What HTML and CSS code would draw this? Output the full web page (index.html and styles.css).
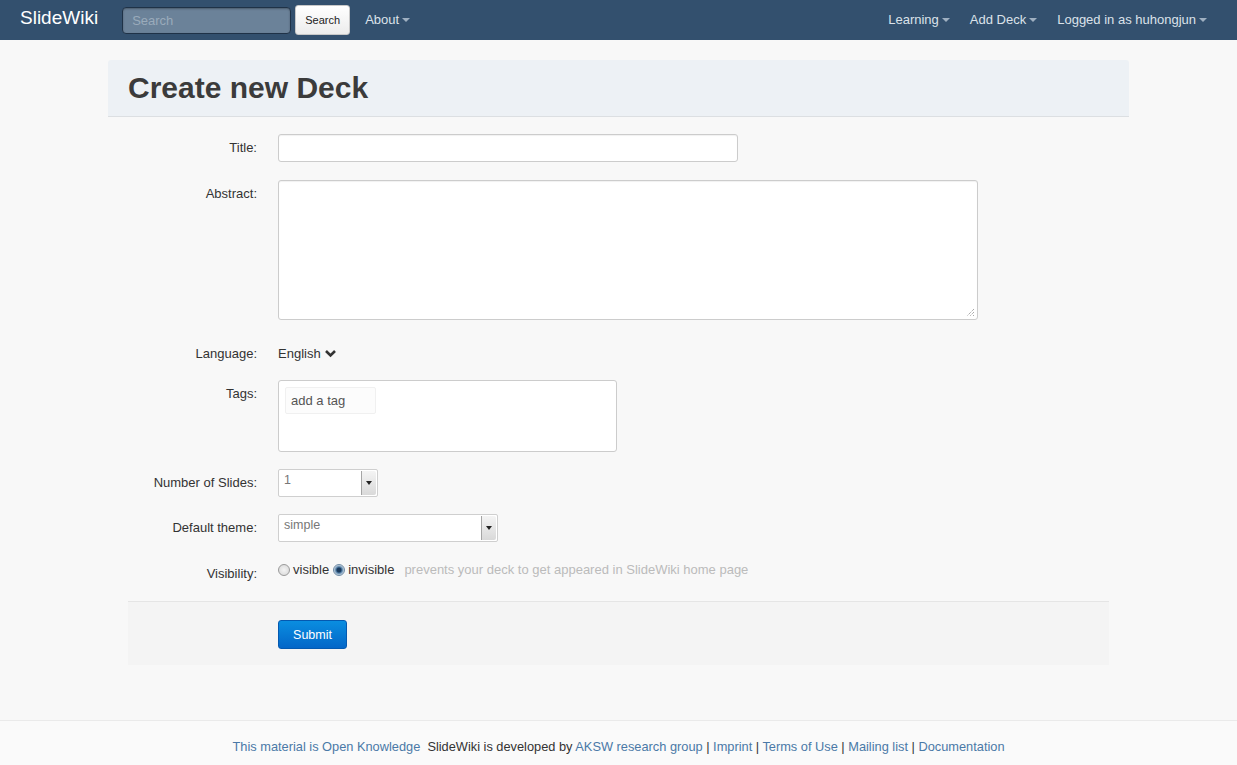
FILE: index.html
```html
<!DOCTYPE html>
<html>
<head>
<meta charset="utf-8">
<link rel="stylesheet" href="styles.css">
</head>
<body>
<div class="navbar">
  <div class="nav-left">
    <a class="brand">SlideWiki</a>
    <input class="search-input" placeholder="Search">
    <button class="search-btn">Search</button>
    <a class="nav-link">About <span class="caret"></span></a>
  </div>
  <div class="nav-right">
    <a class="nav-link">Learning <span class="caret"></span></a>
    <a class="nav-link">Add Deck <span class="caret"></span></a>
    <a class="nav-link">Logged in as huhongjun <span class="caret"></span></a>
  </div>
</div>

<div class="main">
  <div class="page-header"><h1>Create new Deck</h1></div>
  <form class="form">
    <div class="row row-title">
      <label class="lbl">Title:</label>
      <div class="ctl"><input class="text-input title-input"></div>
    </div>
    <div class="row row-abstract">
      <label class="lbl">Abstract:</label>
      <div class="ctl"><div class="textarea"><svg class="grip" width="10" height="10" viewBox="0 0 10 10"><path d="M9 2L2 9M9 5L5 9M9 8L8 9" stroke="#888" stroke-width="1" stroke-dasharray="1 1"/></svg></div></div>
    </div>
    <div class="row row-lang">
      <label class="lbl">Language:</label>
      <div class="ctl lang">English <svg width="11" height="9" viewBox="0 0 11 9"><path d="M1 2L5.5 6.5L10 2" fill="none" stroke="#333" stroke-width="2.6"/></svg></div>
    </div>
    <div class="row row-tags">
      <label class="lbl">Tags:</label>
      <div class="ctl"><div class="tags"><div class="tag-input">add a tag</div></div></div>
    </div>
    <div class="row row-num">
      <label class="lbl">Number of Slides:</label>
      <div class="ctl"><div class="select sel-num"><span class="sel-val">1</span><span class="sel-arrow"><span class="tri"></span></span></div></div>
    </div>
    <div class="row row-theme">
      <label class="lbl">Default theme:</label>
      <div class="ctl"><div class="select sel-theme"><span class="sel-val">simple</span><span class="sel-arrow"><span class="tri"></span></span></div></div>
    </div>
    <div class="row row-vis">
      <label class="lbl">Visibility:</label>
      <div class="ctl vis">
        <span class="radio"></span><span class="rtext">visible</span>
        <span class="radio on"></span><span class="rtext">invisible</span>
        <span class="help">prevents your deck to get appeared in SlideWiki home page</span>
      </div>
    </div>
    <div class="actions">
      <button type="button" class="submit">Submit</button>
    </div>
  </form>
</div>

<div class="footer">
  <a>This material is Open Knowledge</a>&nbsp; SlideWiki is developed by <a>AKSW research group</a> | <a>Imprint</a> | <a>Terms of Use</a> | <a>Mailing list</a> | <a>Documentation</a>
</div>
</body>
</html>
```
FILE: styles.css
```css
* { box-sizing: border-box; }
body {
  margin: 0;
  background: #f8f8f8;
  font-family: "Liberation Sans", Arial, sans-serif;
  font-size: 13px;
  color: #333;
}
.navbar {
  height: 40px;
  background: #33506e;
  display: flex;
  justify-content: space-between;
  align-items: center;
  padding: 0 30px 0 20px;
}
.nav-left, .nav-right { display: flex; align-items: center; }
.brand {
  color: #fff;
  font-size: 19px;
  margin-right: 24px;
  margin-top: -4px;
}
.search-input {
  width: 169px;
  height: 27px;
  background: #6b8299;
  border: 1px solid #1f3247;
  border-radius: 4px;
  box-shadow: inset 0 1px 2px rgba(0,0,0,0.3);
  font-family: inherit;
  font-size: 13px;
  padding: 0 9px;
  color: #fff;
  margin-top: 1px;
}
.search-input::placeholder { color: #9aabbb; }
.search-btn {
  margin-left: 4px;
  width: 55px;
  height: 30px;
  background: linear-gradient(#fff, #ececec);
  border: 1px solid #c8c8c8;
  border-radius: 3px;
  font-family: inherit;
  font-size: 11px;
  color: #222;
  padding: 0;
  margin-top: -1px;
}
.nav-link {
  color: #dbe2ea;
  font-size: 13px;
  display: flex;
  align-items: center;
  margin-top: -2px;
}
.nav-left .nav-link { margin-left: 15px; }
.nav-right .nav-link { margin-left: 20px; }
.caret {
  display: inline-block;
  width: 0; height: 0;
  border-left: 4px solid transparent;
  border-right: 4px solid transparent;
  border-top: 4px solid #9fb0c1;
  margin-left: 3px;
  margin-top: 1px;
}

.main {
  width: 1021px;
  margin: 20px 0 0 108px;
}
.page-header {
  background: #edf1f5;
  border-bottom: 1px solid #dcdfe2;
  border-radius: 3px 3px 0 0;
  height: 57px;
  padding: 0 20px;
}
.page-header h1 {
  margin: 0;
  font-size: 30px;
  line-height: 56px;
  font-weight: bold;
  color: #3b3b3b;
}
.form { padding: 17px 20px 0 20px; }
.row { display: flex; align-items: flex-start; }
.lbl {
  width: 129px;
  text-align: right;
  flex-shrink: 0;
  color: #333;
  font-size: 13px;
  padding-top: 6px;
}
.ctl { margin-left: 21px; }
.text-input {
  background: #fff;
  border: 1px solid #ccc;
  border-radius: 3px;
  box-shadow: inset 0 1px 1px rgba(0,0,0,0.06);
}
.title-input { width: 460px; height: 28px; display: block; }
.row-abstract { margin-top: 18px; }
.textarea {
  width: 700px;
  height: 140px;
  background: #fff;
  border: 1px solid #ccc;
  border-radius: 3px;
  box-shadow: inset 0 1px 1px rgba(0,0,0,0.06);
  position: relative;
}
.grip { position: absolute; right: 2px; bottom: 2px; }
.row-lang { margin-top: 26px; align-items: center; }
.row-lang .lbl { padding-top: 0; }
.lang { font-size: 13px; color: #333; display: flex; align-items: center; gap: 4px; }
.row-tags { margin-top: 19px; }
.tags {
  width: 339px;
  height: 72px;
  background: #fff;
  border: 1px solid #ccc;
  border-radius: 3px;
  padding: 6px;
}
.tag-input {
  width: 91px;
  height: 27px;
  background: #fcfcfc;
  border: 1px solid #f0f0f0;
  border-radius: 2px;
  font-size: 13px;
  color: #555;
  padding: 5px 0 0 5px;
}
.row-num { margin-top: 17px; }
.row-theme { margin-top: 17px; }
.select {
  height: 28px;
  background: #fff;
  border: 1px solid #cfcfcf;
  border-radius: 2px;
  display: flex;
  justify-content: space-between;
}
.sel-num { width: 100px; }
.sel-theme { width: 220px; }
.sel-val { font-size: 12.5px; color: #777; padding: 3px 0 0 5px; }
.sel-arrow {
  width: 15px;
  border-left: 1px solid #a5a5a5;
  background: linear-gradient(#f4f4f4, #d9d9d9);
  display: flex; align-items: center; justify-content: center;
  margin: 1px 1px 1px 0;
  border-radius: 0 2px 2px 0;
}
.tri {
  width: 0; height: 0;
  border-left: 3px solid transparent;
  border-right: 3px solid transparent;
  border-top: 4px solid #222;
}
.row-vis { margin-top: 19px; }
.row-vis .lbl { padding-top: 5px; }
.vis { display: flex; align-items: center; font-size: 13px; padding-top: 0; height: 17px; }
.radio {
  width: 12px; height: 12px;
  border-radius: 50%;
  border: 1px solid #9a9a9a;
  background: radial-gradient(#f4f4f4, #d6d6d6);
  margin-right: 3px;
}
.radio.on { background: radial-gradient(circle, #1b3a5c 0 2px, #4d7aa3 3px, #c9d6e2 5px); border-color: #6f8ba5; }
.rtext { margin-right: 4px; color: #333; }
.help { color: #bbb; margin-left: 6px; font-size: 13px; }
.actions {
  margin-top: 20px;
  background: #f4f4f4;
  border-top: 1px solid #e5e5e5;
  height: 64px;
  padding: 18px 0 0 150px;
}
.submit {
  width: 69px;
  height: 29px;
  background: linear-gradient(#0a8ee0, #0366c8);
  border: 1px solid #0459b0;
  border-radius: 3px;
  color: #fff;
  font-family: inherit;
  font-size: 12.5px;
  padding: 0;
}
.footer {
  margin-top: 55px;
  border-top: 1px solid #eaeaea;
  background: #fafafa;
  text-align: center;
  font-size: 12.8px;
  color: #333;
  padding-top: 18px;
  height: 46px;
}
.footer a { color: #4a79a7; }
```
